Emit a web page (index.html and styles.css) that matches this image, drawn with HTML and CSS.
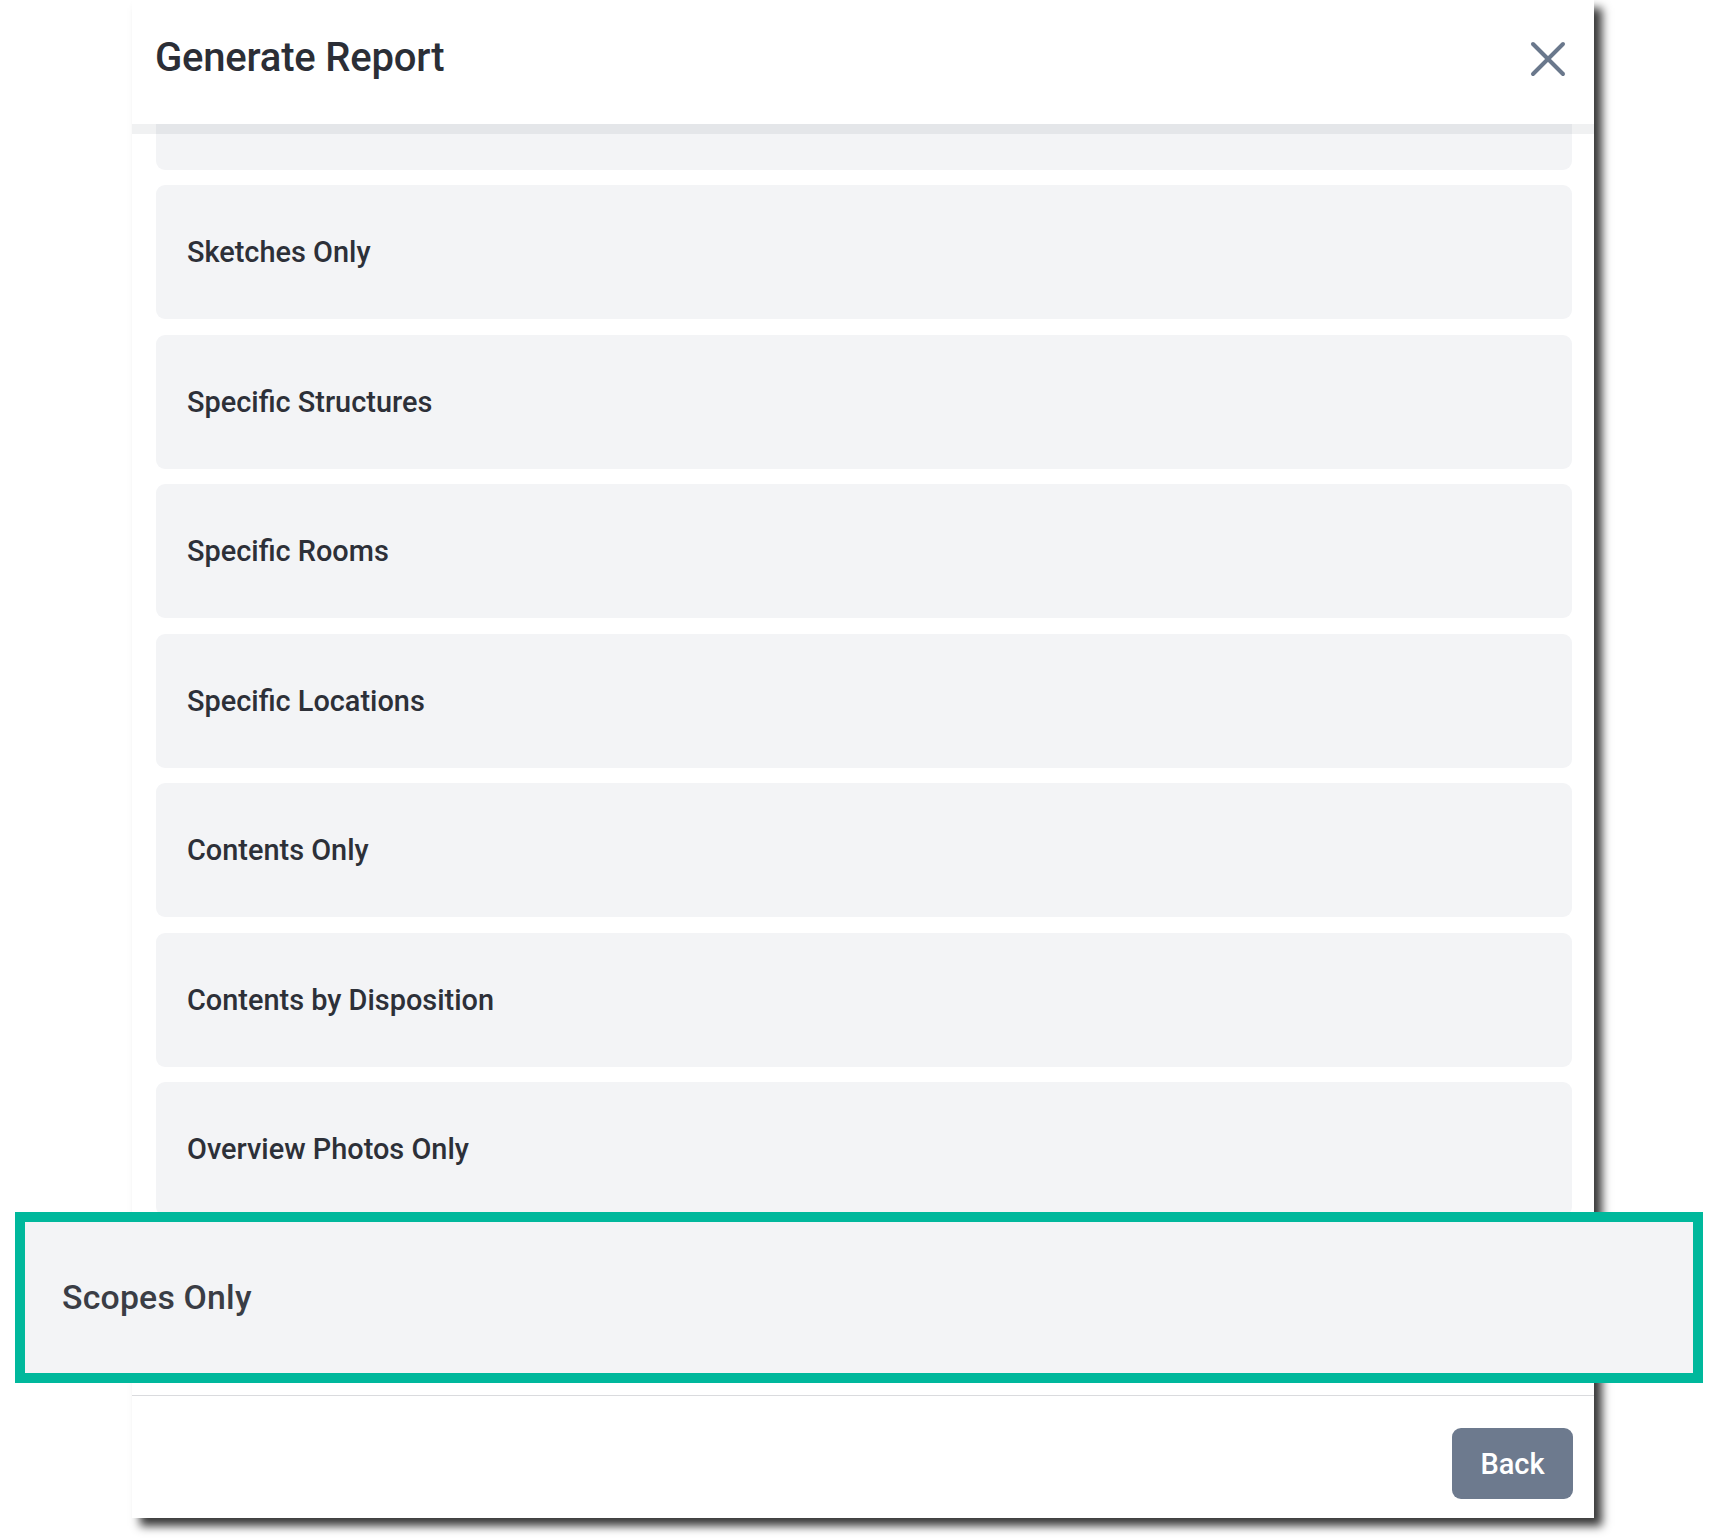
FILE: index.html
```html
<!DOCTYPE html>
<html lang="en">
<head>
<meta charset="utf-8">
<title>Generate Report</title>
<link rel="stylesheet" href="styles.css">
</head>
<body>
<div class="page">
  <div class="modal">
    <header class="modal-header">
      <h1 class="modal-title">Generate Report</h1>
      <button class="close-btn" type="button" aria-label="Close">
        <svg width="36" height="36" viewBox="0 0 36 36" fill="none" stroke="currentColor" stroke-width="4" stroke-linecap="round">
          <line x1="3" y1="3" x2="33" y2="33"/>
          <line x1="33" y1="3" x2="3" y2="33"/>
        </svg>
      </button>
    </header>
    <div class="modal-body">
      <ul class="option-list">
        <li class="option">Full Report</li>
        <li class="option">Sketches Only</li>
        <li class="option">Specific Structures</li>
        <li class="option">Specific Rooms</li>
        <li class="option">Specific Locations</li>
        <li class="option">Contents Only</li>
        <li class="option">Contents by Disposition</li>
        <li class="option">Overview Photos Only</li>
        <li class="option">Scopes Only</li>
      </ul>
    </div>
    <footer class="modal-footer">
      <button class="back-btn" type="button">Back</button>
    </footer>
  </div>

  <div class="callout">
    <span class="callout-label">Scopes Only</span>
  </div>
</div>
</body>
</html>
```

FILE: styles.css
```css
* {
  box-sizing: border-box;
}

html, body {
  margin: 0;
  padding: 0;
  background: #ffffff;
}

body {
  font-family: Roboto, "Liberation Sans", Arial, sans-serif;
  color: #2c2f37;
}

.page {
  position: relative;
  width: 1730px;
  height: 1538px;
  overflow: hidden;
}

/* dialog */
.modal {
  margin-left: 132px;
  width: 1462px;
  height: 1518px;
  background: #ffffff;
  display: flex;
  flex-direction: column;
  box-shadow: 8px 8px 9px rgba(0, 0, 0, 0.78);
}

.modal-header {
  position: relative;
  z-index: 2;
  height: 124px;
  flex: 0 0 124px;
  display: flex;
  align-items: flex-start;
  justify-content: space-between;
  padding: 33px 28px 0 23px;
  background: #ffffff;
}

/* soft band under the header, drawn over the scrolled list */
.modal-header::after {
  content: "";
  position: absolute;
  left: 0;
  right: 0;
  bottom: -10px;
  height: 10px;
  background: rgba(0, 12, 30, 0.06);
}

.modal-title {
  margin: 0;
  font-size: 40px;
  line-height: 50px;
  font-weight: 500;
  color: #2b2e36;
  letter-spacing: -0.2px;
}

.close-btn {
  margin-top: 8px;
  width: 36px;
  height: 36px;
  padding: 0;
  border: 0;
  background: none;
  color: #6a788c;
  display: flex;
}

.modal-body {
  flex: 1 1 auto;
  overflow: hidden;
  padding: 0 22px 0 24px;
  border-bottom: 1px solid #dadbde;
}

/* list is scrolled down a little, so the first option sits under the header */
.option-list {
  list-style: none;
  margin: -88.5px 0 0;
  padding: 0;
  display: flex;
  flex-direction: column;
  gap: 15.5px;
}

.option {
  height: 134px;
  flex: 0 0 134px;
  display: flex;
  align-items: center;
  padding-left: 31px;
  background: #f3f4f6;
  border-radius: 9px;
  font-size: 28.9px;
  font-weight: 500;
  color: #2d3038;
}

.modal-footer {
  flex: 0 0 122px;
  display: flex;
  justify-content: flex-end;
  align-items: flex-start;
  padding: 32px 21px 0 0;
}

.back-btn {
  width: 121px;
  height: 71px;
  border: 0;
  border-radius: 9px;
  background: #6d7a8e;
  color: #ffffff;
  font-family: Roboto, "Liberation Sans", Arial, sans-serif;
  font-size: 29px;
  font-weight: 500;
  padding: 0;
}

/* enlarged highlight of the selected option */
.callout {
  position: absolute;
  left: 15px;
  top: 1212px;
  width: 1688px;
  height: 171px;
  border: 10px solid #00b89c;
  background: #f3f4f6;
  display: flex;
  align-items: center;
  padding-left: 37px;
}

.callout-label {
  font-size: 33.8px;
  font-weight: 500;
  color: #3a3d45;
  letter-spacing: 0.2px;
}
```
